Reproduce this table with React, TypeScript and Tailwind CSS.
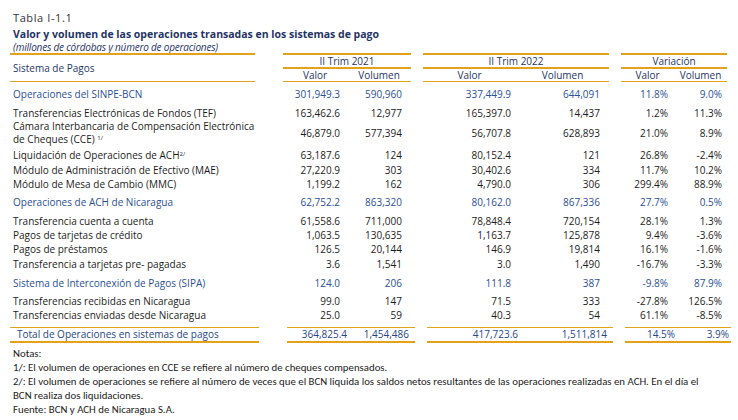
import React from "react";

type Row = {
  label: React.ReactNode;
  v21: string;
  n21: string;
  v22: string;
  n22: string;
  pv: string;
  pn: string;
  blue?: boolean;
  gap: string;
  tall?: boolean;
};

const rows: Row[] = [
  { label: "Operaciones del SINPE-BCN", v21: "301,949.3", n21: "590,960", v22: "337,449.9", n22: "644,091", pv: "11.8%", pn: "9.0%", blue: true, gap: "mt-[5px]" },
  { label: "Transferencias Electrónicas de Fondos (TEF)", v21: "163,462.6", n21: "12,977", v22: "165,397.0", n22: "14,437", pv: "1.2%", pn: "11.3%", gap: "mt-[5px]" },
  {
    label: (
      <>
        Cámara Interbancaria de Compensación Electrónica
        <br />
        de Cheques (CCE) <sup className="text-[6px]">1/</sup>
      </>
    ),
    v21: "46,879.0", n21: "577,394", v22: "56,707.8", n22: "628,893", pv: "21.0%", pn: "8.9%", gap: "mt-0", tall: true,
  },
  {
    label: (
      <>
        Liquidación de Operaciones de ACH<sup className="text-[6px]">2/</sup>
      </>
    ),
    v21: "63,187.6", n21: "124", v22: "80,152.4", n22: "121", pv: "26.8%", pn: "-2.4%", gap: "mt-[2px]",
  },
  { label: "Módulo de Administración de Efectivo (MAE)", v21: "27,220.9", n21: "303", v22: "30,402.6", n22: "334", pv: "11.7%", pn: "10.2%", gap: "mt-[1px]" },
  { label: "Módulo de Mesa de Cambio (MMC)", v21: "1,199.2", n21: "162", v22: "4,790.0", n22: "306", pv: "299.4%", pn: "88.9%", gap: "mt-0" },
  { label: "Operaciones de ACH de Nicaragua", v21: "62,752.2", n21: "863,320", v22: "80,162.0", n22: "867,336", pv: "27.7%", pn: "0.5%", blue: true, gap: "mt-[4px]" },
  { label: "Transferencia cuenta a cuenta", v21: "61,558.6", n21: "711,000", v22: "78,848.4", n22: "720,154", pv: "28.1%", pn: "1.3%", gap: "mt-[5px]" },
  { label: "Pagos de tarjetas de crédito", v21: "1,063.5", n21: "130,635", v22: "1,163.7", n22: "125,878", pv: "9.4%", pn: "-3.6%", gap: "mt-0" },
  { label: "Pagos de préstamos", v21: "126.5", n21: "20,144", v22: "146.9", n22: "19,814", pv: "16.1%", pn: "-1.6%", gap: "mt-0" },
  { label: "Transferencia a tarjetas pre- pagadas", v21: "3.6", n21: "1,541", v22: "3.0", n22: "1,490", pv: "-16.7%", pn: "-3.3%", gap: "mt-[1px]" },
  { label: "Sistema de Interconexión de Pagos (SIPA)", v21: "124.0", n21: "206", v22: "111.8", n22: "387", pv: "-9.8%", pn: "87.9%", blue: true, gap: "mt-[5px]" },
  { label: "Transferencias recibidas en Nicaragua", v21: "99.0", n21: "147", v22: "71.5", n22: "333", pv: "-27.8%", pn: "126.5%", gap: "mt-[4px]" },
  { label: "Transferencias enviadas desde Nicaragua", v21: "25.0", n21: "59", v22: "40.3", n22: "54", pv: "61.1%", pn: "-8.5%", gap: "mt-0" },
];

function DataRow({ r }: { r: Row }) {
  const color = r.blue ? "text-[#2b4f98]" : "text-[#1c1c1c]";
  const h = r.tall ? "h-[26px] leading-[13px]" : "h-[14px] leading-[14px]";
  return (
    <div className={`flex items-center ${h} ${r.gap} ${color}`}>
      <div className="w-[242px] pl-[3px] whitespace-nowrap">{r.label}</div>
      <div className="ml-[28px] flex w-[128px]">
        <div className="w-[60px] text-right">{r.v21}</div>
        <div className="w-[62px] text-right">{r.n21}</div>
      </div>
      <div className="ml-[12px] flex w-[186px]">
        <div className="w-[91px] text-right">{r.v22}</div>
        <div className="w-[89px] text-right">{r.n22}</div>
      </div>
      <div className="ml-[12px] flex w-[106px]">
        <div className="w-[50px] text-right">{r.pv}</div>
        <div className="w-[54px] text-right">{r.pn}</div>
      </div>
    </div>
  );
}

function GroupHead({ title, w, ml }: { title: string; w: string; ml: string }) {
  return (
    <div className={`${w} ${ml} flex flex-col`}>
      <div className="box-content h-[12px] border-t-2 border-b-2 border-[#e3a21a] text-center leading-[12px]">{title}</div>
      <div className="box-content grid h-[12px] grid-cols-2 border-b border-[#e3a21a] text-center leading-[12px]">
        <div>Valor</div>
        <div>Volumen</div>
      </div>
    </div>
  );
}

export default function App() {
  return (
    <div className="h-[420px] w-[738px] bg-white pl-[10px] pt-[11px] text-[10px] [font-family:'Open_Sans','Noto_Sans',sans-serif]">
      <div className="pl-[3px] text-[11px] leading-[13px] tracking-[0.6px] text-[#333]">Tabla I-1.1</div>
      <div className="mt-[4px] pl-[3px] text-[10.5px] font-bold leading-[13px] text-[#1f3566]">
        Valor y volumen de las operaciones transadas en los sistemas de pago
      </div>
      <div className="pl-[3px] text-[10px] italic leading-[12px] tracking-[-0.2px] text-[#1f3566]">
        (millones de córdobas y número de operaciones)
      </div>

      <div className="flex text-[#1f3566]">
        <div className="box-content flex h-[26px] w-[242px] items-center border-t-2 border-b border-[#e3a21a] pl-[3px]">
          Sistema de Pagos
        </div>
        <GroupHead title="II Trim 2021" w="w-[128px]" ml="ml-[28px]" />
        <GroupHead title="II Trim 2022" w="w-[186px]" ml="ml-[12px]" />
        <GroupHead title="Variación" w="w-[106px]" ml="ml-[12px]" />
      </div>

      {rows.map((r, i) => (
        <DataRow key={i} r={r} />
      ))}

      <div className="mt-[5px] flex text-[#27468a]">
        <div className="box-content flex h-[13px] w-[242px] items-center border-t border-b-2 border-[#e3a21a] pl-[7px]">
          Total de Operaciones en sistemas de pagos
        </div>
        <div className="box-content ml-[28px] flex h-[13px] w-[128px] items-center border-t border-b-2 border-[#e3a21a]">
          <div className="w-[60px] text-right">364,825.4</div>
          <div className="w-[62px] text-right">1,454,486</div>
        </div>
        <div className="box-content ml-[12px] flex h-[13px] w-[186px] items-center border-t border-b-2 border-[#e3a21a]">
          <div className="w-[91px] text-right">417,723.6</div>
          <div className="w-[89px] text-right">1,511,814</div>
        </div>
        <div className="box-content ml-[12px] flex h-[13px] w-[106px] items-center border-t border-b-2 border-[#e3a21a]">
          <div className="w-[50px] text-right">14.5%</div>
          <div className="w-[54px] text-right">3.9%</div>
        </div>
      </div>

      <div className="mt-[4px] pl-[3px] text-[10.8px] leading-[14px] text-[#222] [font-family:Carlito,Lato,sans-serif]">
        <div>Notas:</div>
        <div>1/: El volumen de operaciones en CCE se refiere al número de cheques compensados.</div>
        <div>
          2/: El volumen de operaciones se refiere al número de veces que el BCN liquida los saldos netos resultantes de las operaciones realizadas en ACH. En el día el
        </div>
        <div>BCN realiza dos liquidaciones.</div>
        <div>Fuente: BCN y ACH de Nicaragua S.A.</div>
      </div>
    </div>
  );
}
